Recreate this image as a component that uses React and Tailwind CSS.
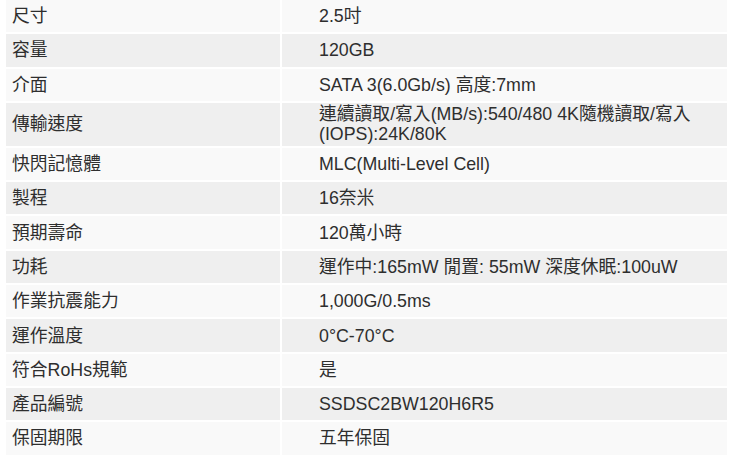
import React from 'react';

// spec rows: [label, value]
const specs = [
  ['尺寸', '2.5吋'],
  ['容量', '120GB'],
  ['介面', 'SATA 3(6.0Gb/s) 高度:7mm'],
  ['傳輸速度', ['連續讀取/寫入(MB/s):540/480 4K隨機讀取/寫入', '(IOPS):24K/80K']],
  ['快閃記憶體', 'MLC(Multi-Level Cell)'],
  ['製程', '16奈米'],
  ['預期壽命', '120萬小時'],
  ['功耗', '運作中:165mW 閒置: 55mW 深度休眠:100uW'],
  ['作業抗震能力', '1,000G/0.5ms'],
  ['運作溫度', '0°C-70°C'],
  ['符合RoHs規範', '是'],
  ['產品編號', 'SSDSC2BW120H6R5'],
  ['保固期限', '五年保固'],
];

export default function App() {
  return (
    <div
      className="min-h-screen bg-white pl-[6px] pr-[2px] text-[17.8px] text-[#2e2e2e]"
      style={{ fontFamily: '"Liberation Sans", Arial, "Noto Sans CJK TC", sans-serif' }}
    >
      <div className="grid grid-cols-[274px_1fr] gap-[2px]">
        {specs.map(([label, value], i) => {
          const bg = i % 2 === 0 ? 'bg-[#f9f9f9]' : 'bg-[#efefef]';
          const tall = Array.isArray(value);
          const h = tall ? 'h-[43px]' : 'h-[32.3px]';
          return (
            <React.Fragment key={label}>
              <div className={`${bg} ${h} flex items-center pl-[6px] leading-5`}>{label}</div>
              <div className={`${bg} ${h} flex items-center pl-[37px] leading-5`}>
                {tall ? (
                  <div>
                    <div>{value[0]}</div>
                    <div>{value[1]}</div>
                  </div>
                ) : (
                  value
                )}
              </div>
            </React.Fragment>
          );
        })}
      </div>
    </div>
  );
}
